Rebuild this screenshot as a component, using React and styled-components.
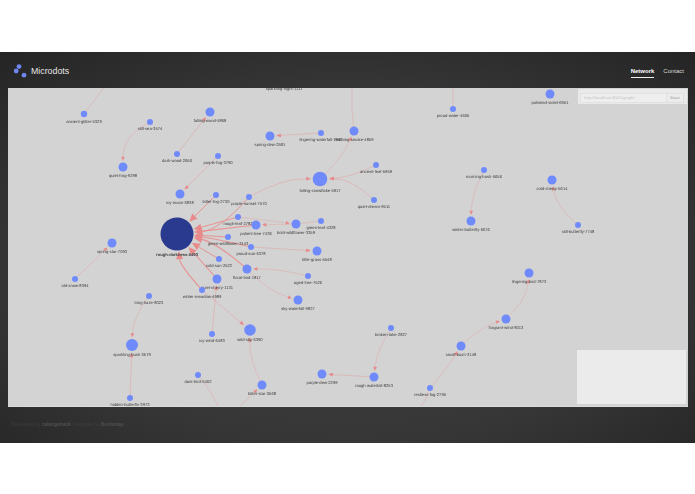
import React from 'react';
import styled, { createGlobalStyle } from 'styled-components';

const GlobalStyle = createGlobalStyle`
  html, body {
    margin: 0;
    padding: 0;
    background: #fff;
    font-family: "Liberation Sans", Arial, sans-serif;
  }
`;

const Page = styled.div`
  padding-top: 52px;
  height: 494px;
  box-sizing: border-box;
  background: #fff;
`;

const Shell = styled.div`
  height: 391px;
  display: flex;
  flex-direction: column;
  background: radial-gradient(ellipse 75% 75% at 50% 55%, #444 0%, #363636 60%, #242424 100%);
`;

const Header = styled.header`
  height: 36px;
  flex: none;
  display: flex;
  align-items: center;
  justify-content: space-between;
  padding: 2px 11px 0 12px;
  box-sizing: border-box;
`;

const Brand = styled.div`
  display: flex;
  align-items: center;
  gap: 3px;
  color: #e6e6e6;
  font-size: 8.8px;
`;

const Nav = styled.nav`
  display: flex;
  gap: 9px;
  align-items: flex-start;
`;

const NavLink = styled.a`
  color: ${(p) => (p.$active ? '#fff' : '#d8d8d8')};
  font-size: 6px;
  font-weight: ${(p) => (p.$active ? 700 : 400)};
  padding: 4px 0 3px;
  border-bottom: 1px solid ${(p) => (p.$active ? '#f0f0f0' : 'transparent')};
`;

const GraphPanel = styled.main`
  position: relative;
  height: 318px;
  flex: none;
  margin: 0 7px 0 8px;
  background: #d3d3d3;
  overflow: hidden;
  box-shadow: 0 1px 0 #dcdcdc;
`;

const GraphSvg = styled.svg`
  display: block;
  width: 100%;
  height: 100%;
  filter: blur(0.25px);
`;

const NodeLabel = styled.text`
  font-family: "Liberation Sans", Arial, sans-serif;
  font-size: 4.15px;
  font-weight: ${(p) => (p.$bold ? 700 : 400)};
  fill: #3d3d3d;
  text-anchor: middle;
  text-rendering: geometricPrecision;
`;

const SaveForm = styled.form`
  position: absolute;
  top: 1px;
  right: 1px;
  width: 109px;
  height: 15px;
  box-sizing: border-box;
  display: flex;
  padding: 4px 3px 1px 2px;
  background: #e9e9e9;
`;

const UrlField = styled.div`
  flex: 1;
  height: 10px;
  box-sizing: border-box;
  padding-left: 3px;
  background: #eeeeee;
  border: 1px solid #e2e2e2;
  border-right: 0;
  color: #c4c4c4;
  font-size: 4.2px;
  line-height: 8px;
`;

const SaveButton = styled.div`
  width: 18px;
  height: 10px;
  box-sizing: border-box;
  background: #ececec;
  border: 1px solid #e0e0e0;
  color: #a0a0a0;
  font-size: 4.4px;
  line-height: 8px;
  text-align: center;
`;

const MiniMap = styled.div`
  position: absolute;
  right: 2px;
  bottom: 2px;
  width: 109px;
  height: 54px;
  background: #ebebeb;
`;

const Footer = styled.footer`
  flex: 1;
  display: flex;
  align-items: center;
  padding: 0 11px;
  color: #3f3f3f;
  font-size: 4.8px;
`;

const FooterLink = styled.a`
  color: #505050;
  font-weight: 700;
`;

const nodes = {
  ancientGlitter: [84, 114, 3.2, 'ancient-glitter-5329'],
  stillSea: [150, 122, 3, 'still-sea-3574'],
  fallingWood: [210, 112, 4.5, 'falling-wood-5868'],
  darkWood: [177, 154, 3, 'dark-wood-2650'],
  purpleFog: [218, 156, 3, 'purple-fog-3790'],
  quietFrog: [123, 167, 4.5, 'quiet-frog-9298'],
  icyMoon: [180, 194, 4.5, 'icy-moon-6838'],
  bitterFog: [216, 195, 3, 'bitter-fog-2730'],
  purpleSunset: [249, 197, 3, 'purple-sunset-7570'],
  snowflake: [320, 179, 7.3, 'falling-snowflake-5917'],
  roughDarkness: [177, 234, 16.5, 'rough-darkness-6493', true],
  roughLeaf: [238, 217, 3, 'rough-leaf-2782'],
  patientTree: [256, 225, 4.5, 'patient-tree-7436'],
  boldWildflower: [296, 224, 4.5, 'bold-wildflower-3359'],
  greenLeaf: [321, 221, 3, 'green-leaf-4328'],
  greenWildflower: [228, 237, 3, 'green-wildflower-3143'],
  proudSun: [251, 247, 3, 'proud-sun-6378'],
  littleGrass: [317, 251, 4.5, 'little-grass-5548'],
  coldSun: [219, 259, 3, 'cold-sun-2522'],
  floralBird: [247, 269, 4.5, 'floral-bird-1817'],
  agedTree: [308, 276, 3, 'aged-tree-7526'],
  quietCherry: [217, 279, 4.5, 'quiet-cherry-1131'],
  winterMeadow: [202, 290, 3, 'winter-meadow-4989'],
  skyWaterfall: [298, 300, 4.5, 'sky-waterfall-9827'],
  longHaze: [149, 296, 3, 'long-haze-8023'],
  wildSky: [250, 330, 5.8, 'wild-sky-6390'],
  bitterStar: [262, 385, 4.5, 'bitter-star-3568'],
  purpleDew: [322, 374, 4.5, 'purple-dew-2299'],
  roughWaterfall: [374, 377, 4.5, 'rough-waterfall-8253'],
  brokenLake: [391, 328, 3, 'broken-lake-2827'],
  smallBush: [461, 346, 4.5, 'small-bush-3148'],
  restlessFog: [430, 388, 3, 'restless-fog-2795'],
  lingeringBird: [529, 273, 4.5, 'lingering-bird-7873'],
  fragrantWind: [506, 319, 4.5, 'fragrant-wind-8013'],
  springStar: [112, 243, 4.5, 'spring-star-7093'],
  oldSnow: [75, 279, 3, 'old-snow-8394'],
  sparklingBush: [132, 345, 6, 'sparkling-bush-3579'],
  hiddenButterfly: [130, 398, 3, 'hidden-butterfly-3973'],
  icyWind: [212, 334, 3, 'icy-wind-6483'],
  darkBird: [198, 375, 3, 'dark-bird-5402'],
  springDew: [270, 136, 4.5, 'spring-dew-2581'],
  lingeringWaterfall: [321, 133, 3, 'lingering-waterfall-7892'],
  morningSmoke: [354, 131, 4.5, 'morning-smoke-4859'],
  ancientLeaf: [376, 165, 3, 'ancient-leaf-5959'],
  quietDream: [374, 200, 3, 'quiet-dream-9511'],
  proudWater: [453, 109, 3, 'proud-water-4505'],
  polishedViolet: [550, 94, 4.5, 'polished-violet-6951'],
  morningBush: [484, 170, 3, 'morning-bush-5656'],
  coldCherry: [552, 180, 4.5, 'cold-cherry-5614'],
  winterButterfly: [471, 221, 4.5, 'winter-butterfly-6676'],
  stillButterfly: [578, 225, 3, 'still-butterfly-7748'],
  sparklingNight: [284, 82, 3, 'sparkling-night-1111'],
};

// from, to, how far the middle of the line bows, line width, arrow
const edges = [
  [[105, 86], 'ancientGlitter', 0, 0.5, false],
  ['stillSea', 'quietFrog', 8, 0.5],
  ['darkWood', 'fallingWood', 0, 0.6],
  ['purpleFog', 'icyMoon', 0, 0.6],
  ['bitterFog', 'roughDarkness', 0, 1],
  ['purpleSunset', 'roughDarkness', -8, 1],
  ['roughLeaf', 'roughDarkness', 0, 1],
  ['patientTree', 'roughDarkness', 0, 1.1],
  ['greenWildflower', 'roughDarkness', 0, 1],
  ['proudSun', 'roughDarkness', 1, 1],
  ['coldSun', 'roughDarkness', 0, 1],
  ['floralBird', 'roughDarkness', 5, 1.1],
  ['quietCherry', 'roughDarkness', 0, 1.1],
  ['winterMeadow', 'roughDarkness', -5, 1.1],
  ['purpleSunset', 'snowflake', -5, 0.6],
  ['ancientLeaf', 'snowflake', -3, 0.6],
  ['quietDream', 'snowflake', 6, 0.6],
  ['snowflake', 'morningSmoke', 3, 0.5],
  ['lingeringWaterfall', 'springDew', 0, 0.6],
  [[352, 86], 'morningSmoke', 1, 0.5, false],
  [[453, 86], 'proudWater', 0, 0.5, false],
  ['roughLeaf', 'boldWildflower', 0, 0.5],
  ['boldWildflower', 'patientTree', 0, 0.5],
  ['greenLeaf', 'boldWildflower', 0, 0.5, false],
  ['proudSun', 'littleGrass', 0, 0.6],
  ['agedTree', 'floralBird', 2, 0.5],
  ['floralBird', 'skyWaterfall', 4, 0.5],
  ['winterMeadow', 'wildSky', 0, 0.6],
  ['icyWind', 'quietCherry', 0, 0.6],
  ['bitterStar', 'wildSky', -3.5, 0.5],
  [[238, 408], 'bitterStar', 0, 0.5],
  ['darkBird', [219, 408], -1.5, 0.5, false],
  ['longHaze', 'sparklingBush', 4, 0.5],
  ['hiddenButterfly', 'sparklingBush', 0, 0.6],
  ['oldSnow', 'springStar', 0, 0.5],
  ['morningBush', 'winterButterfly', 3, 0.5],
  ['stillButterfly', 'coldCherry', -5, 0.5],
  ['brokenLake', 'roughWaterfall', 3, 0.5],
  ['roughWaterfall', 'purpleDew', 0, 0.6],
  ['restlessFog', 'smallBush', 1, 0.5],
  [[420, 408], 'restlessFog', 1, 0.5, false],
  ['smallBush', 'fragrantWind', -3, 0.5],
  ['fragrantWind', 'lingeringBird', 5, 0.5],
];

const point = (ref) => (Array.isArray(ref) ? [ref[0], ref[1], 0] : nodes[ref]);

function Edge({ from, to, curve, width, arrow = true }) {
  const [x1, y1] = point(from);
  const [x2, y2, r] = point(to);
  const dx = x2 - x1;
  const dy = y2 - y1;
  const len = Math.hypot(dx, dy);
  const cx = (x1 + x2) / 2 - (dy / len) * curve * 2;
  const cy = (y1 + y2) / 2 + (dx / len) * curve * 2;
  const ax = x2 - cx;
  const ay = y2 - cy;
  const al = Math.hypot(ax, ay);
  const ux = ax / al;
  const uy = ay / al;
  const big = width >= 1;
  const size = big ? 8 : width >= 0.6 ? 4.6 : 4;
  const half = big ? 3.6 : 1.9;
  const gap = big ? 0.8 : 1.8;
  const tipX = x2 - ux * (r + gap);
  const tipY = y2 - uy * (r + gap);
  const baseX = tipX - ux * size;
  const baseY = tipY - uy * size;
  return (
    <g>
      <path
        d={`M${x1} ${y1}Q${cx} ${cy} ${arrow ? baseX : x2} ${arrow ? baseY : y2}`}
        fill="none"
        stroke="#e88f8f"
        strokeOpacity={big ? 0.95 : 0.65}
        strokeWidth={width}
      />
      {arrow && (
        <polygon
          points={`${tipX},${tipY} ${baseX - uy * half},${baseY + ux * half} ${baseX + uy * half},${baseY - ux * half}`}
          fill="#e88a8a"
        />
      )}
    </g>
  );
}

function Logo() {
  return (
    <svg width="16" height="14" viewBox="0 0 16 14">
      <path d="M7 2.5 4 7l8 4" fill="none" stroke="#222" strokeWidth="0.8" />
      <circle cx="7" cy="2.6" r="2.4" fill="#6f86f0" />
      <circle cx="4.2" cy="7" r="2.4" fill="#6f86f0" />
      <circle cx="12" cy="11.2" r="2.4" fill="#6f86f0" />
    </svg>
  );
}

function App() {
  return (
    <Page>
      <GlobalStyle />
      <Shell>
        <Header>
          <Brand>
            <Logo />
            Microdots
          </Brand>
          <Nav>
            <NavLink $active>Network</NavLink>
            <NavLink>Contact</NavLink>
          </Nav>
        </Header>
        <GraphPanel>
          <GraphSvg viewBox="8 88 680 318">
            {edges.map(([from, to, curve, width, arrow], i) => (
              <Edge key={i} from={from} to={to} curve={curve} width={width} arrow={arrow} />
            ))}
            {Object.values(nodes).map(([x, y, r, name, heavy]) => (
              <g key={name}>
                <circle cx={x} cy={y} r={r} fill={heavy ? '#2a3a8f' : '#6f8bfb'} />
                <NodeLabel x={x} y={y + r + 5.4} $bold={heavy}>
                  {name}
                </NodeLabel>
              </g>
            ))}
          </GraphSvg>
          <SaveForm>
            <UrlField>http://localhost:8001/graph/</UrlField>
            <SaveButton>Save</SaveButton>
          </SaveForm>
          <MiniMap />
        </GraphPanel>
        <Footer>
          <span>
            Developed by <FooterLink>calangohack</FooterLink> | template by{' '}
            <FooterLink>Bootstrap</FooterLink>
          </span>
        </Footer>
      </Shell>
    </Page>
  );
}

export default App;
